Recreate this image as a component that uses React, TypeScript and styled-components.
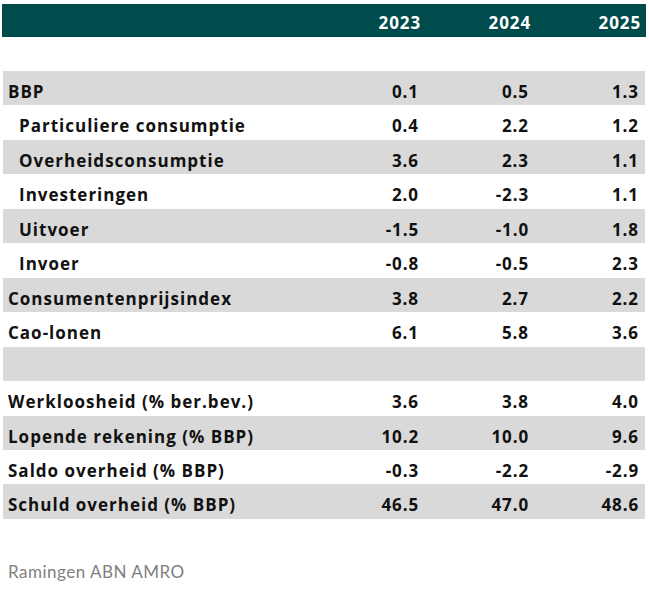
import React from "react";
import styled, { createGlobalStyle } from "styled-components";

const Global = createGlobalStyle`
body {
    margin: 0;
    background: #ffffff;
    font-family: "Open Sans", "Liberation Sans", sans-serif;
}
`;

type Row = {
    label: string;
    values?: string[];
    indent?: boolean;
};

const rows: Row[] = [
    { label: "BBP", values: ["0.1", "0.5", "1.3"] },
    { label: "Particuliere consumptie", values: ["0.4", "2.2", "1.2"], indent: true },
    { label: "Overheidsconsumptie", values: ["3.6", "2.3", "1.1"], indent: true },
    { label: "Investeringen", values: ["2.0", "-2.3", "1.1"], indent: true },
    { label: "Uitvoer", values: ["-1.5", "-1.0", "1.8"], indent: true },
    { label: "Invoer", values: ["-0.8", "-0.5", "2.3"], indent: true },
    { label: "Consumentenprijsindex", values: ["3.8", "2.7", "2.2"] },
    { label: "Cao-lonen", values: ["6.1", "5.8", "3.6"] },
    { label: "" },
    { label: "Werkloosheid (% ber.bev.)", values: ["3.6", "3.8", "4.0"] },
    { label: "Lopende rekening (% BBP)", values: ["10.2", "10.0", "9.6"] },
    { label: "Saldo overheid (% BBP)", values: ["-0.3", "-2.2", "-2.9"] },
    { label: "Schuld overheid (% BBP)", values: ["46.5", "47.0", "48.6"] },
];

const App = () => {
    return (
        <Page>
            <Global />
            <Table>
                <Head>
                    <span />
                    <Year>2023</Year>
                    <Year>2024</Year>
                    <Year>2025</Year>
                </Head>
                <Spacer />
                {rows.map((r, i) => (
                    <Line key={i} $shade={i % 2 === 0}>
                        <Label $indent={!!r.indent}>{r.label}</Label>
                        {(r.values || ["", "", ""]).map((v, j) => (
                            <Num key={j}>{v}</Num>
                        ))}
                    </Line>
                ))}
            </Table>
            <Source>Ramingen ABN AMRO</Source>
        </Page>
    );
};

export default App;

const Page = styled.div`
width: 649px;
height: 590px;
padding: 4px 4px 0 3px;
box-sizing: border-box;
`;

const Table = styled.div`
display: flex;
flex-direction: column;
`;

const Head = styled.div`
display: grid;
grid-template-columns: 1fr 110px 110px 110px;
height: 33px;
padding: 0 5px 0 0;
margin: 0 -1px;
background-color: #004b4b;
color: #ffffff;
font-size: 17px;
font-weight: 700;
letter-spacing: 0.9px;
`;

const Year = styled.div`
text-align: right;
line-height: 33px;
padding-top: 2px;
`;

const Spacer = styled.div`
height: 34px;
`;

const Line = styled.div<{ $shade: boolean }>`
display: grid;
grid-template-columns: 1fr 110px 110px 110px;
height: 34.46px;
padding-right: 6px;
background-color: ${(p) => (p.$shade ? "#d9d9d9" : "#ffffff")};
color: #111111;
font-size: 17px;
font-weight: 700;
line-height: 34px;
letter-spacing: 0.9px;
`;

const Label = styled.div<{ $indent: boolean }>`
padding-left: ${(p) => (p.$indent ? "16px" : "5px")};
padding-top: 4px;
white-space: nowrap;
letter-spacing: 1px;
`;

const Num = styled.div`
text-align: right;
padding-top: 4px;
`;

const Source = styled.div`
margin-top: 42px;
padding-left: 5px;
font-family: "Lato", "Open Sans", sans-serif;
font-size: 17px;
letter-spacing: 0.5px;
color: #808080;
`;
